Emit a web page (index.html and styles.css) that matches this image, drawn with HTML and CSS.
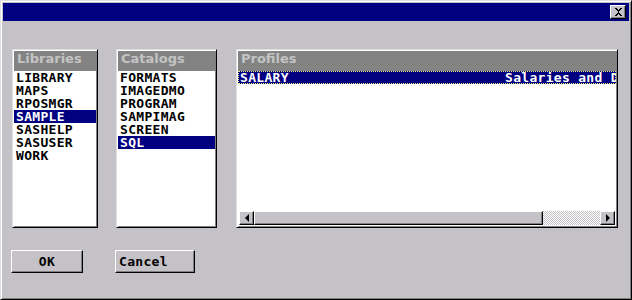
FILE: index.html
```html
<!DOCTYPE html>
<html lang="en">
<head>
  <meta charset="UTF-8" />
  <title>Select Profile</title>
  <link rel="stylesheet" href="styles.css">
</head>
<body>
  <div class="window">
    <div class="titlebar">
      <span class="close">
        <svg width="9" height="8" viewBox="0 0 9 8">
          <path d="M1 0h2v1h1v1h1V1h1V0h2v1H7v1H6v1H5v2h1v1h1v1h1v1H6V7H5V6H4v1H3v1H1V7h1V6h1V5h1V3H3V2H2V1H1z" fill="#000"/>
        </svg>
      </span>
    </div>

    <div class="body">
      <div class="lists">
        <div class="listbox libraries">
          <div class="listhead">Libraries</div>
          <ul class="items">
            <li>LIBRARY</li>
            <li>MAPS</li>
            <li>RPOSMGR</li>
            <li class="sel">SAMPLE</li>
            <li>SASHELP</li>
            <li>SASUSER</li>
            <li>WORK</li>
          </ul>
        </div>

        <div class="listbox catalogs">
          <div class="listhead">Catalogs</div>
          <ul class="items">
            <li>FORMATS</li>
            <li>IMAGEDMO</li>
            <li>PROGRAM</li>
            <li>SAMPIMAG</li>
            <li>SCREEN</li>
            <li class="sel">SQL</li>
          </ul>
        </div>

        <div class="listbox profiles">
          <div class="listhead">Profiles</div>
          <div class="rows">
            <div class="row sel">
              <span class="name">SALARY</span>
              <span class="desc">Salaries and Departments</span>
            </div>
          </div>
          <div class="hscroll">
            <span class="arrow"><span class="tri left"></span></span>
            <span class="thumb"></span>
            <span class="track"></span>
            <span class="arrow"><span class="tri right"></span></span>
          </div>
        </div>
      </div>

      <div class="buttons">
        <button class="btn ok">OK</button>
        <button class="btn cancel">Cancel</button>
      </div>
    </div>
  </div>
</body>
</html>
```

FILE: styles.css
```css
:root {
  --face: #c4c2c6;
  --navy: #000080;
  --shade: #838383;
}

body {
  margin: 0;
  background: var(--face);
}

.window {
  width: 632px;
  height: 300px;
  box-sizing: border-box;
  padding: 2px;
  background: var(--face);
  border: 1px solid;
  border-color: #dfdfdf #000 #000 #dfdfdf;
  box-shadow: inset 1px 1px #fff, inset -1px -1px #808080;
}

.titlebar {
  height: 18px;
  background: var(--navy);
  display: flex;
  justify-content: flex-end;
  align-items: center;
  padding-right: 3px;
}

.close {
  width: 16px;
  height: 14px;
  box-sizing: border-box;
  background: var(--face);
  border: 1px solid;
  border-color: #fff #000 #000 #fff;
  box-shadow: inset -1px -1px #808080;
  display: flex;
  align-items: center;
  justify-content: center;
}

.body {
  padding: 28px 9px 0 9px;
}

.lists {
  display: flex;
  gap: 18px;
  height: 179px;
}

.listbox {
  box-sizing: border-box;
  height: 100%;
  padding: 1px;
  background: #fff;
  border: 1px solid;
  border-color: #dfdfdf #000 #000 #dfdfdf;
  box-shadow: inset 1px 1px #fff, inset -1px -1px #808080;
  display: flex;
  flex-direction: column;
}

.libraries { width: 86px; }
.catalogs { width: 101px; }
.profiles { width: 382px; margin-left: 1px; }

.listhead {
  height: 20px;
  line-height: 20px;
  padding-left: 3px;
  background: var(--shade);
  color: #c4c4c4;
  font: bold 13px "DejaVu Sans", sans-serif;
}

.items {
  list-style: none;
  margin: 0;
  padding: 0;
}

.items li,
.row {
  height: 13px;
  line-height: 13px;
  padding-left: 2px;
  font: bold 13px/13px "DejaVu Sans Mono", monospace;
  letter-spacing: 0.3px;
  color: #000;
  white-space: nowrap;
}

.sel {
  background: var(--navy);
  color: #fff !important;
}

.rows {
  flex: 1;
  overflow: hidden;
}

.row {
  display: flex;
  outline: 1px dotted #e8e880;
  outline-offset: -1px;
}

.row .name {
  width: 265px;
  flex: none;
}

.hscroll {
  height: 14px;
  display: flex;
  margin: 0 1px 1px 1px;
}

.arrow,
.thumb {
  box-sizing: border-box;
  background: var(--face);
  border: 1px solid;
  border-color: #fff #000 #000 #fff;
  box-shadow: inset -1px -1px #808080;
}

.arrow {
  width: 15px;
  display: flex;
  align-items: center;
  justify-content: center;
}

.thumb {
  width: 289px;
}

.track {
  flex: 1;
  background: repeating-conic-gradient(#fff 0 25%, #c4c2c6 0 50%) 0 0 / 2px 2px;
}

.tri {
  width: 0;
  height: 0;
  border-top: 4px solid transparent;
  border-bottom: 4px solid transparent;
}

.tri.left { border-right: 4px solid #000; }
.tri.right { border-left: 4px solid #000; }

.buttons {
  display: flex;
  gap: 32px;
  margin: 22px 0 0 -1px;
}

.btn {
  height: 23px;
  box-sizing: border-box;
  padding: 0 3px;
  background: var(--face);
  border: 1px solid;
  border-color: #fff #000 #000 #fff;
  box-shadow: inset -1px -1px #808080;
  font: bold 13px "DejaVu Sans Mono", monospace;
  letter-spacing: 0.3px;
  color: #000;
}

.ok {
  width: 72px;
  text-align: center;
}

.cancel {
  width: 80px;
  text-align: left;
}
```
